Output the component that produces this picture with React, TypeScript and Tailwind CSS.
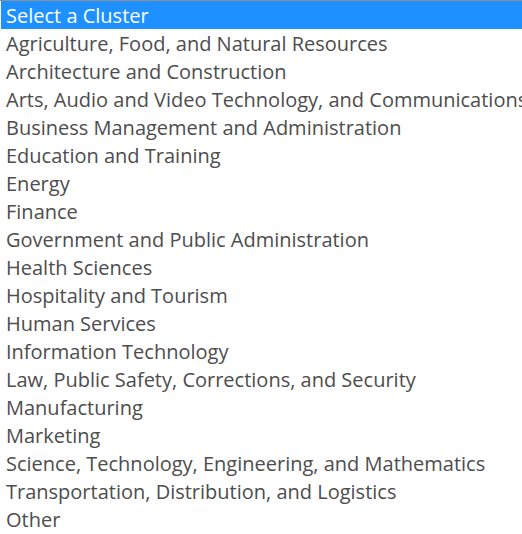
import type React from "react";

const clusters = [
	"Agriculture, Food, and Natural Resources",
	"Architecture and Construction",
	"Arts, Audio and Video Technology, and Communications",
	"Business Management and Administration",
	"Education and Training",
	"Energy",
	"Finance",
	"Government and Public Administration",
	"Health Sciences",
	"Hospitality and Tourism",
	"Human Services",
	"Information Technology",
	"Law, Public Safety, Corrections, and Security",
	"Manufacturing",
	"Marketing",
	"Science, Technology, Engineering, and Mathematics",
	"Transportation, Distribution, and Logistics",
	"Other",
];

const App: React.FC = () => {
	return (
		<div
			className="w-[522px] h-[534px] overflow-hidden bg-white border-t border-[#8f8f8f]"
			style={{ fontFamily: '"Open Sans", sans-serif' }}
		>
			<ul className="flex flex-col pl-px text-[20px] leading-[27px] text-[#4d4d4d]">
				{/* Highlighted option */}
				<li className="h-[28px] pt-px bg-[#1e90ff] text-white pl-[5px] whitespace-nowrap">
					Select a Cluster
				</li>
				{clusters.map((name) => (
					<li key={name} className="h-[28px] pt-px pl-[5px] whitespace-nowrap overflow-hidden">
						{name}
					</li>
				))}
			</ul>
		</div>
	);
};

export default App;
